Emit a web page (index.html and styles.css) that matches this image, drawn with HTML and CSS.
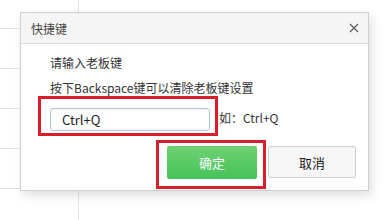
FILE: index.html
```html
<!DOCTYPE html>
<html lang="zh-CN">
<head>
<meta charset="utf-8">
<title>快捷键</title>
<link rel="stylesheet" href="styles.css">
</head>
<body>
<div class="dialog">
  <div class="dialog-header">
    <span class="dialog-title">快捷键</span>
    <svg class="close" width="10" height="10" viewBox="0 0 10 10"><path d="M1 1L9 9M9 1L1 9" stroke="#555" stroke-width="1.1" fill="none"/></svg>
  </div>
  <div class="dialog-body">
    <p class="line first">请输入老板键</p>
    <p class="line">按下Backspace键可以清除老板键设置</p>
    <div class="input-row">
      <div class="input-wrap mark">
        <input class="key-input" type="text" value="Ctrl+Q">
      </div>
      <span class="hint">如：Ctrl+Q</span>
    </div>
    <div class="buttons">
      <div class="ok-wrap mark2"><button class="btn btn-ok">确定</button></div>
      <button class="btn btn-cancel">取消</button>
    </div>
  </div>
</div>
</body>
</html>
```
FILE: styles.css
```css
html, body {
  margin: 0;
  padding: 0;
}
body {
  width: 390px;
  height: 220px;
  overflow: hidden;
  font-family: "Noto Sans CJK SC", sans-serif;
  color: #333;
  background-color: #fff;
  background-image:
    linear-gradient(to right, transparent 78px, #e4e4e4 78px, #e4e4e4 79px, transparent 79px),
    linear-gradient(#e4e4e4 1px, transparent 1px);
  background-size: 100% 100%, 20px 40px;
  background-position: 0 0, 0 28px;
  background-repeat: no-repeat, repeat-y;
  padding: 12px 0 0 20px;
  box-sizing: border-box;
}
.dialog {
  width: 349px;
  height: 179px;
  box-sizing: border-box;
  border: 1px solid #cfcfcf;
  background: #fff;
  box-shadow: 3px 5px 10px rgba(0, 0, 0, 0.12);
  display: flex;
  flex-direction: column;
}
.dialog-header {
  height: 31px;
  box-sizing: border-box;
  background: #f5f5f5;
  border-bottom: 1px solid #dedede;
  display: flex;
  align-items: center;
  justify-content: space-between;
  padding: 0 9px 0 10px;
}
.dialog-title {
  font-size: 12px;
  color: #444;
}
.close {
  display: block;
  width: 10px;
  height: 10px;
}
.dialog-body {
  padding: 9px 12px 0 29px;
  display: flex;
  flex-direction: column;
}
.line {
  margin: 0;
  font-size: 12px;
  line-height: 20px;
  height: 20px;
}
.line + .line {
  margin-top: 5px;
}
.input-row {
  margin-top: 8px;
  display: flex;
  align-items: center;
  height: 23px;
}
.input-wrap {
  position: relative;
  width: 160px;
  height: 23px;
}
.mark::after {
  content: "";
  position: absolute;
  left: -12px;
  top: -10px;
  right: -8px;
  bottom: -7px;
  border: 3px solid #d61f2b;
  pointer-events: none;
}
.key-input {
  width: 160px;
  height: 23px;
  box-sizing: border-box;
  border: 1px solid #b5c6d8;
  border-radius: 3px;
  padding: 0 0 0 11px;
  font-family: "Noto Sans CJK SC", sans-serif;
  font-size: 13px;
  color: #222;
  background: #fff;
  box-shadow: inset 0 1px 2px rgba(0, 0, 0, 0.06);
  outline: none;
}
.hint {
  margin-left: 9px;
  font-size: 12px;
  color: #333;
}
.buttons {
  margin-top: 17px;
  display: flex;
  justify-content: flex-end;
  align-items: flex-start;
  gap: 11px;
}
.ok-wrap {
  position: relative;
  width: 90px;
  height: 33px;
}
.mark2::after {
  content: "";
  position: absolute;
  left: -11px;
  top: -6px;
  right: -9px;
  bottom: -10px;
  border: 3px solid #d61f2b;
  pointer-events: none;
}
.btn {
  font-family: "Noto Sans CJK SC", sans-serif;
  font-size: 13px;
  border-radius: 2px;
  padding: 0;
  margin: 0;
}
.btn-ok {
  width: 90px;
  height: 33px;
  border: none;
  color: #fff;
  background: linear-gradient(#6dd172, #47c35a);
}
.btn-cancel {
  width: 88px;
  height: 32px;
  border: 1px solid #cfcfcf;
  color: #222;
  background: #f6f6f6;
}
```
